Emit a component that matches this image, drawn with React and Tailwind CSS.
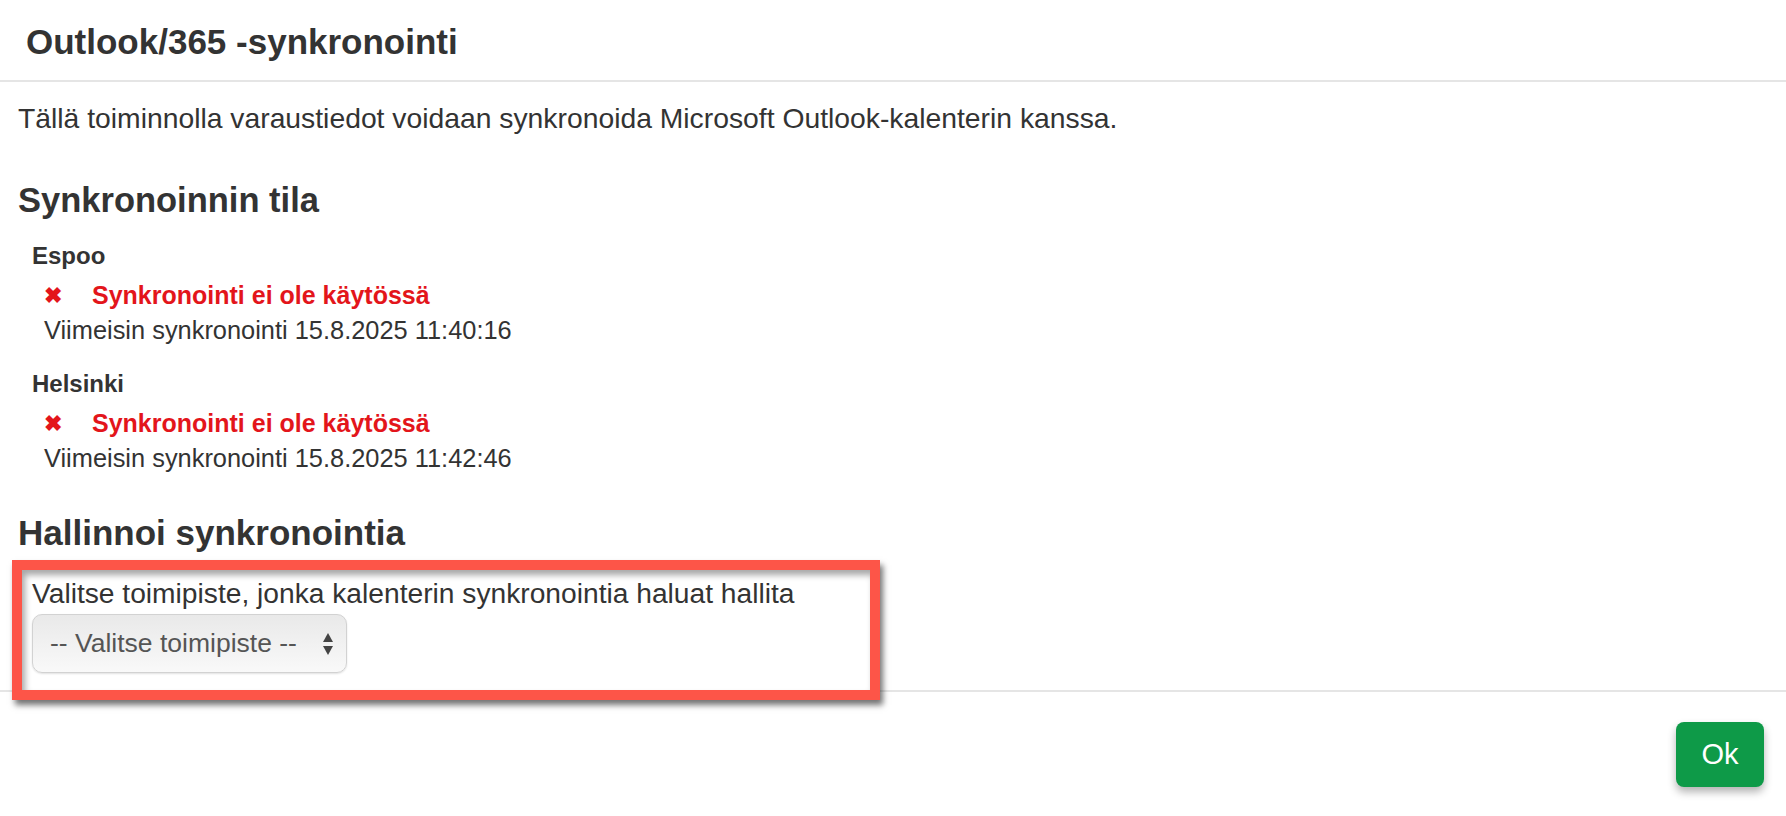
import React from "react";

const locations = [
  { name: "Espoo", last: "15.8.2025 11:40:16" },
  { name: "Helsinki", last: "15.8.2025 11:42:46" },
];

function SyncStatus({ name, last }) {
  return (
    <div className="pl-[14px]">
      <div className="h-[35px] leading-[35px] text-[24px] font-bold">{name}</div>
      <div className="mt-[5px] h-[35px] flex items-center pl-[12px] text-[25px] font-bold text-[#e3151b]">
        <span className="w-[48px] text-[22px] leading-none">✖</span>
        <span>Synkronointi ei ole käytössä</span>
      </div>
      <div className="h-[35px] leading-[35px] pl-[12px] text-[25.4px]">
        Viimeisin synkronointi {last}
      </div>
    </div>
  );
}

export default function App() {
  return (
    <div className="w-[1786px] h-[816px] bg-white text-[#333] font-['Liberation_Sans',Arial,sans-serif] flex flex-col overflow-hidden">
      {/* Header */}
      <div className="h-[82px] flex items-center pl-[26px] border-b-2 border-[#e5e5e5]">
        <h1 className="text-[35px] font-semibold leading-[40px] mt-[4px]">Outlook/365 -synkronointi</h1>
      </div>

      {/* Body */}
      <div className="pl-[18px] pt-[16px] flex-1">
        <p className="text-[28.3px] leading-[40px]">
          Tällä toiminnolla varaustiedot voidaan synkronoida Microsoft Outlook-kalenterin kanssa.
        </p>

        <h2 className="mt-[40px] text-[34.5px] font-semibold leading-[44px]">Synkronoinnin tila</h2>
        <div className="mt-[16px]">
          <SyncStatus {...locations[0]} />
        </div>
        <div className="mt-[18px]">
          <SyncStatus {...locations[1]} />
        </div>

        <h2 className="mt-[35px] text-[35px] font-semibold leading-[44px]">Hallinnoi synkronointia</h2>

        {/* highlighted area */}
        <div className="relative z-10 mt-[5px] -ml-[6px] -mb-[10px] w-[868px] h-[140px] border-[10px] border-[#fd5548] bg-white pl-[10px] pt-[6px] shadow-[3px_5px_6px_rgba(0,0,0,0.55),inset_3px_5px_6px_rgba(0,0,0,0.35)]">
          <div className="text-[28.2px] leading-[34px]">
            Valitse toimipiste, jonka kalenterin synkronointia haluat hallita
          </div>
          <div className="mt-[4px] w-[315px] h-[59px] rounded-[10px] border border-[#d2d2d2] bg-gradient-to-b from-[#e9e9e9] to-[#f9f9f9] shadow-[0_1px_2px_rgba(0,0,0,0.12)] flex items-center justify-between pl-[17px] pr-[12px]">
            <span className="text-[26.5px] text-[#555]">-- Valitse toimipiste --</span>
            <svg width="12" height="24" viewBox="0 0 12 24" className="text-[#444]">
              <path d="M6 1 L11 10 L1 10 Z" fill="currentColor" />
              <path d="M1 14 L11 14 L6 23 Z" fill="currentColor" />
            </svg>
          </div>
        </div>
      </div>

      {/* Footer */}
      <div className="h-[126px] border-t-2 border-[#e5e5e5] flex items-start justify-end pt-[30px] pr-[22px]">
        <button className="w-[88px] h-[65px] rounded-[8px] bg-[#0e9a48] text-white text-[29px] shadow-[0_5px_8px_rgba(0,0,0,0.3)]">
          Ok
        </button>
      </div>
    </div>
  );
}
